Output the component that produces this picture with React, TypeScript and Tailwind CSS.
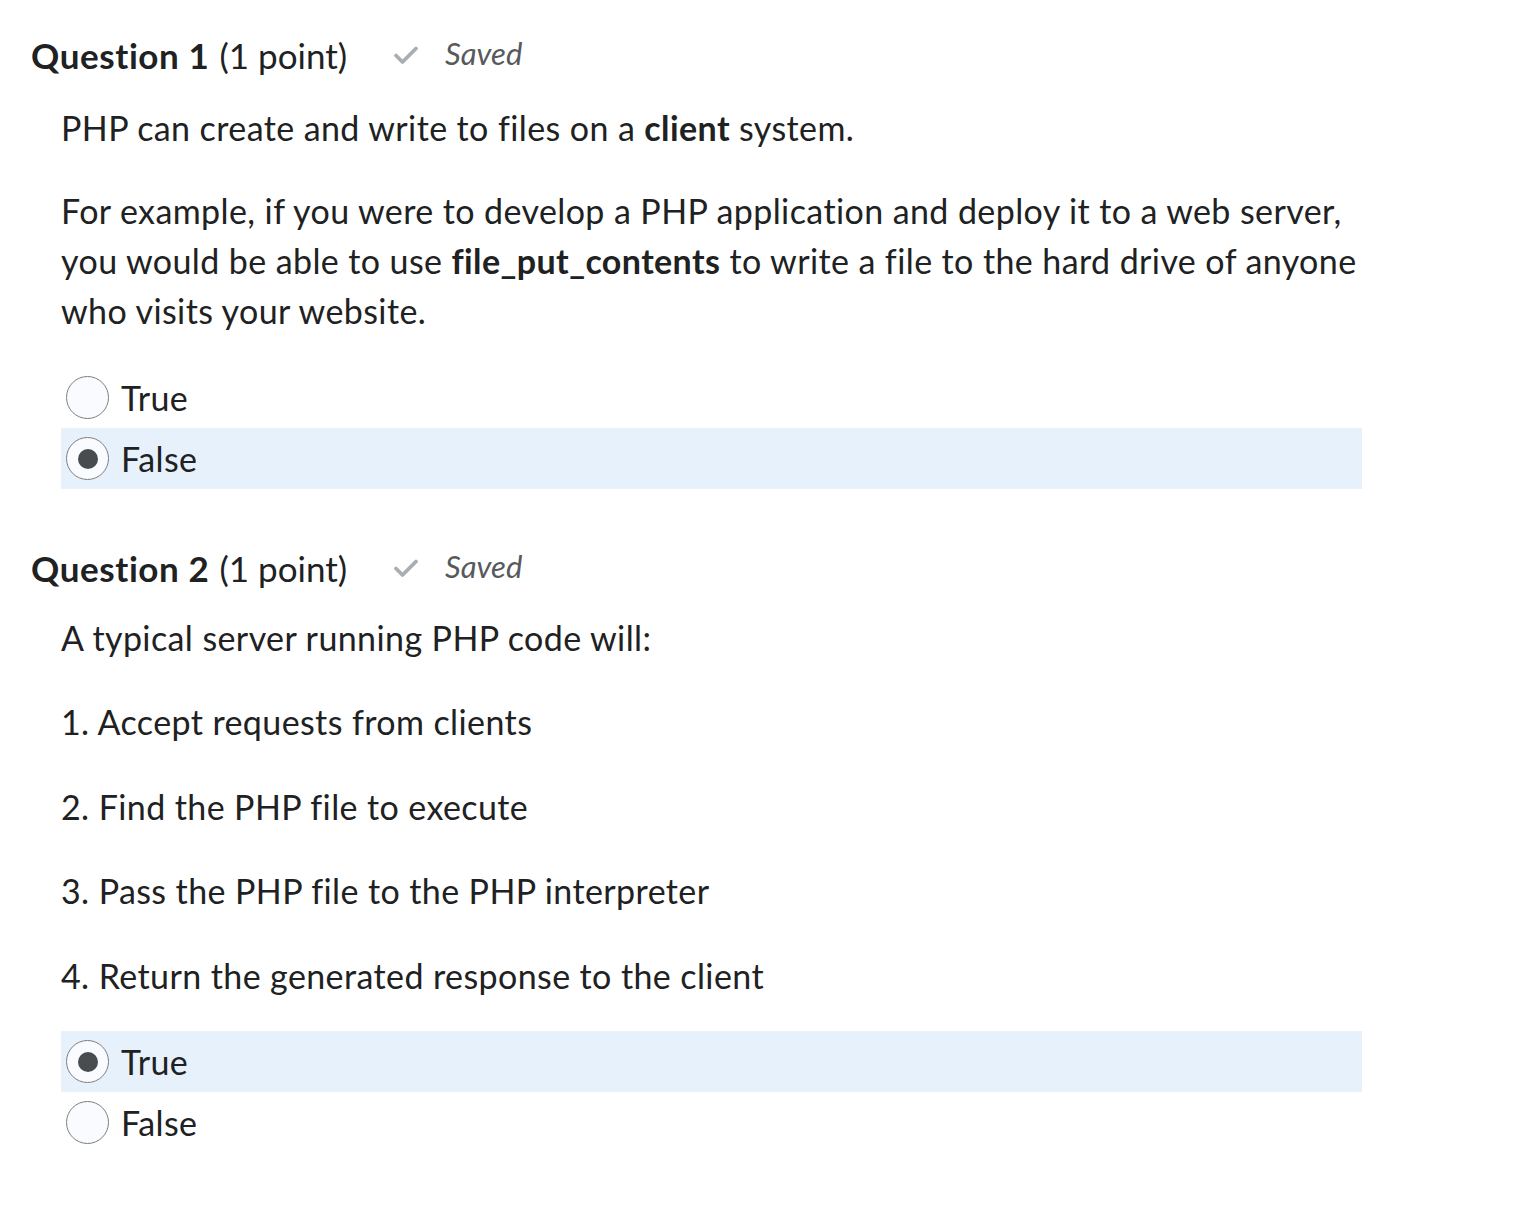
import React from 'react';

function Check() {
  return (
    <svg width="26" height="20" viewBox="0 0 26 20" className="shrink-0">
      <path d="M3 10.5 L9.5 17 L23 3.5" fill="none" stroke="#a9aeb1" strokeWidth="3.8" strokeLinecap="round" strokeLinejoin="round" />
    </svg>
  );
}

function Radio({ label, checked }: { label: string; checked?: boolean }) {
  return (
    <div className={`flex h-[61px] w-[1301px] items-center ${checked ? 'bg-[#e7f1fb]' : ''}`}>
      <span className="ml-[5px] flex h-[43px] w-[43px] items-center justify-center rounded-full border border-[#7c8083] bg-[#f9fbff]">
        {checked && <span className="h-[20px] w-[20px] rounded-full bg-[#494c4e]" />}
      </span>
      <span className="ml-[12px] text-[34px] text-[#202122]">{label}</span>
    </div>
  );
}

function Heading({ n }: { n: number }) {
  return (
    <div className="flex h-[50px] items-center pl-[31px]">
      <span className="text-[35px] font-bold tracking-[0.6px] text-[#202122]">Question {n}</span>
      <span className="ml-[10px] text-[35px] tracking-[0px] text-[#202122]">(1 point)</span>
      <span className="ml-[46px] flex items-center gap-[26px]">
        <Check />
        <span className="-mt-[4px] text-[31px] italic tracking-[0px] text-[#565a5c]">Saved</span>
      </span>
    </div>
  );
}

export default function App() {
  return (
    <div className="min-h-[1213px] bg-white pt-[30px] font-['Lato',sans-serif] leading-[50px] tracking-[0.4px] text-[#202122] [font-variant-ligatures:none]">
      <Heading n={1} />
      <div className="pl-[61px]">
        <p className="mt-[23px] text-[34px]">
          PHP can create and write to files on a <b>client</b> system.
        </p>
        <p className="mt-[33px] w-[1301px] text-[34px]">
          For example, if you were to develop a PHP application and deploy it to a web server, you would be able to use <b>file_put_contents</b> to write a file to the hard drive of anyone who visits your website.
        </p>
        <div className="mt-[31px]">
          <Radio label="True" />
          <Radio label="False" checked />
        </div>
      </div>

      <div className="mt-[54px]">
        <Heading n={2} />
      </div>
      <div className="pl-[61px]">
        <p className="mt-[20px] text-[34px]">A typical server running PHP code will:</p>
        <p className="mt-[34px] text-[34px]">1. Accept requests from clients</p>
        <p className="mt-[35px] text-[34px]">2. Find the PHP file to execute</p>
        <p className="mt-[34px] text-[34px]">3. Pass the PHP file to the PHP interpreter</p>
        <p className="mt-[35px] text-[34px]">4. Return the generated response to the client</p>
        <div className="mt-[30px]">
          <Radio label="True" checked />
          <Radio label="False" />
        </div>
      </div>
    </div>
  );
}
